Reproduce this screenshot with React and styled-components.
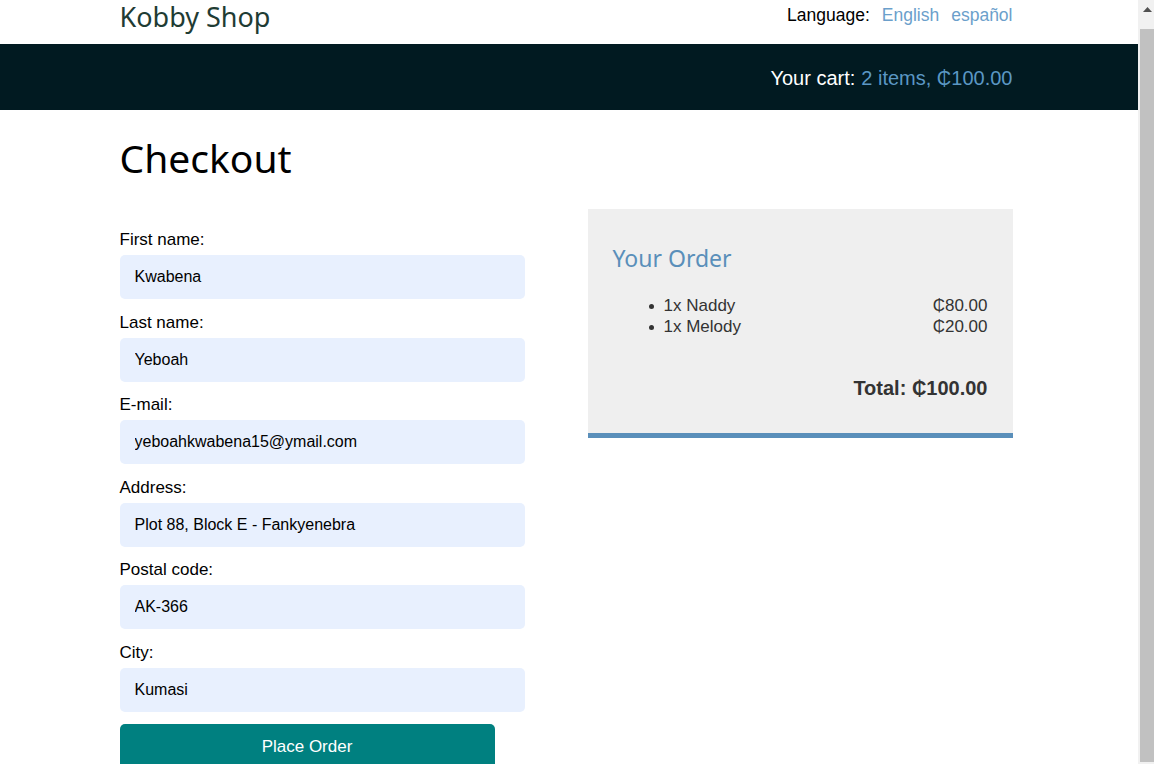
import React from 'react';
import styled, { createGlobalStyle } from 'styled-components';

const GlobalStyle = createGlobalStyle`
  body {
    margin: 0 16px 0 0;
    background: #fff;
    font-family: "Liberation Sans", Arial, sans-serif;
    color: #000;
  }
  * { box-sizing: border-box; }
`;

const HEADING_FONT = `"Noto Sans", "Open Sans", sans-serif`;

// the browser's classic scrollbar, drawn over the right edge
const ScrollTrack = styled.div`
  position: fixed;
  top: 0;
  right: 0;
  width: 16px;
  height: 100vh;
  background: #f1f1f1;
  display: flex;
  flex-direction: column;
  align-items: flex-end;
`;

const ScrollArrow = styled.div`
  width: 100%;
  height: 29px;
  display: flex;
  justify-content: center;
  padding: 7px 0 0 3px;
`;

const ScrollThumb = styled.div`
  width: 14px;
  height: 733px;
  background: #c1c1c1;
`;

const Wrap = styled.div`
  width: 893px;
  margin: 0 auto;
  position: relative;
  left: -3px;
`;

const TopBar = styled.header`
  height: 44px;
`;

const TopInner = styled(Wrap)`
  display: flex;
  justify-content: space-between;
  align-items: flex-start;
`;

const Logo = styled.a`
  font-family: ${HEADING_FONT};
  font-size: 27px;
  line-height: 34px;
  color: #1f3c34;
  text-decoration: none;
`;

const LangBox = styled.div`
  display: flex;
  gap: 12px;
  font-size: 17.5px;
  line-height: 30px;
  color: #000;
`;

const LangLink = styled.a`
  color: #6b9fcb;
  text-decoration: none;
`;

const CartBar = styled.div`
  height: 66px;
  background: #011a21;
`;

const CartInner = styled(Wrap)`
  display: flex;
  justify-content: flex-end;
  align-items: center;
  height: 100%;
  padding-top: 2px;
  font-size: 20px;
  color: #fff;
`;

const CartLink = styled.a`
  color: #5b97c4;
  text-decoration: none;
  margin-left: 6px;
`;

const Title = styled.h1`
  font-family: ${HEADING_FONT};
  font-weight: 400;
  font-size: 39px;
  line-height: 52px;
  margin: 22px 0 0;
  color: #000;
`;

const Columns = styled.div`
  display: grid;
  grid-template-columns: 405px 425px;
  justify-content: space-between;
  align-items: start;
  margin-top: 25px;
`;

const Form = styled.form`
  display: flex;
  flex-direction: column;
  padding-top: 20px;
`;

const Field = styled.div`
  display: flex;
  flex-direction: column;
  margin-bottom: 12.6px;
`;

const Label = styled.label`
  font-size: 17px;
  line-height: 22px;
  margin-bottom: 4px;
`;

const Input = styled.input`
  height: 44px;
  border: none;
  border-radius: 5px;
  background: #e8f0fe;
  padding: 0 15px;
  font-family: "Liberation Sans", Arial, sans-serif;
  font-size: 16px;
  color: #000;
  outline: none;
`;

const Submit = styled.button`
  width: 375px;
  height: 46px;
  margin-top: -1px;
  border: none;
  border-radius: 5px;
  background: #008080;
  color: #fff;
  font-family: "Liberation Sans", Arial, sans-serif;
  font-size: 17px;
  cursor: pointer;
`;

const OrderPanel = styled.aside`
  background: #efefef;
  border-bottom: 5px solid #5a8fba;
  padding: 34px 25px 33px;
`;

const OrderTitle = styled.h3`
  font-family: ${HEADING_FONT};
  font-weight: 400;
  font-size: 23px;
  line-height: 30px;
  color: #5a8fba;
  margin: 0 0 22px;
`;

const Items = styled.ul`
  margin: 0;
  padding-left: 51px;
  font-size: 17px;
  line-height: 21px;
  color: #333;
`;

const Item = styled.li`
  display: flex;
  justify-content: space-between;
  list-style: none;
  position: relative;

  &::before {
    content: '';
    position: absolute;
    left: -15px;
    top: 9px;
    width: 5px;
    height: 5px;
    border-radius: 50%;
    background: #333;
  }
`;

const Total = styled.p`
  margin: 40px 0 0;
  text-align: right;
  font-size: 20px;
  font-weight: 700;
  color: #333;
`;

const fields = [
  { id: 'first_name', label: 'First name:', value: 'Kwabena' },
  { id: 'last_name', label: 'Last name:', value: 'Yeboah' },
  { id: 'email', label: 'E-mail:', value: 'yeboahkwabena15@ymail.com' },
  { id: 'address', label: 'Address:', value: 'Plot 88, Block E - Fankyenebra' },
  { id: 'postal_code', label: 'Postal code:', value: 'AK-366' },
  { id: 'city', label: 'City:', value: 'Kumasi' },
];

const items = [
  { qty: 1, name: 'Naddy', price: '₵80.00' },
  { qty: 1, name: 'Melody', price: '₵20.00' },
];

export default function App() {
  return (
    <>
      <GlobalStyle />
      <TopBar>
        <TopInner>
          <Logo href="#">Kobby Shop</Logo>
          <LangBox>
            <span>Language:</span>
            <LangLink href="#">English</LangLink>
            <LangLink href="#">español</LangLink>
          </LangBox>
        </TopInner>
      </TopBar>
      <CartBar>
        <CartInner>
          Your cart:<CartLink href="#">2 items, ₵100.00</CartLink>
        </CartInner>
      </CartBar>
      <Wrap>
        <Title>Checkout</Title>
        <Columns>
          <Form onSubmit={e => e.preventDefault()}>
            {fields.map(f => (
              <Field key={f.id}>
                <Label htmlFor={f.id}>{f.label}</Label>
                <Input id={f.id} defaultValue={f.value} />
              </Field>
            ))}
            <Submit type="submit">Place Order</Submit>
          </Form>
          <OrderPanel>
            <OrderTitle>Your Order</OrderTitle>
            <Items>
              {items.map(it => (
                <Item key={it.name}>
                  <span>{it.qty}x {it.name}</span>
                  <span>{it.price}</span>
                </Item>
              ))}
            </Items>
            <Total>Total: ₵100.00</Total>
          </OrderPanel>
        </Columns>
      </Wrap>
      <ScrollTrack>
        <ScrollArrow>
          <svg width="9" height="5" viewBox="0 0 9 5">
            <path d="M4.5 0 L9 5 L0 5 Z" fill="#505050" />
          </svg>
        </ScrollArrow>
        <ScrollThumb />
      </ScrollTrack>
    </>
  );
}
